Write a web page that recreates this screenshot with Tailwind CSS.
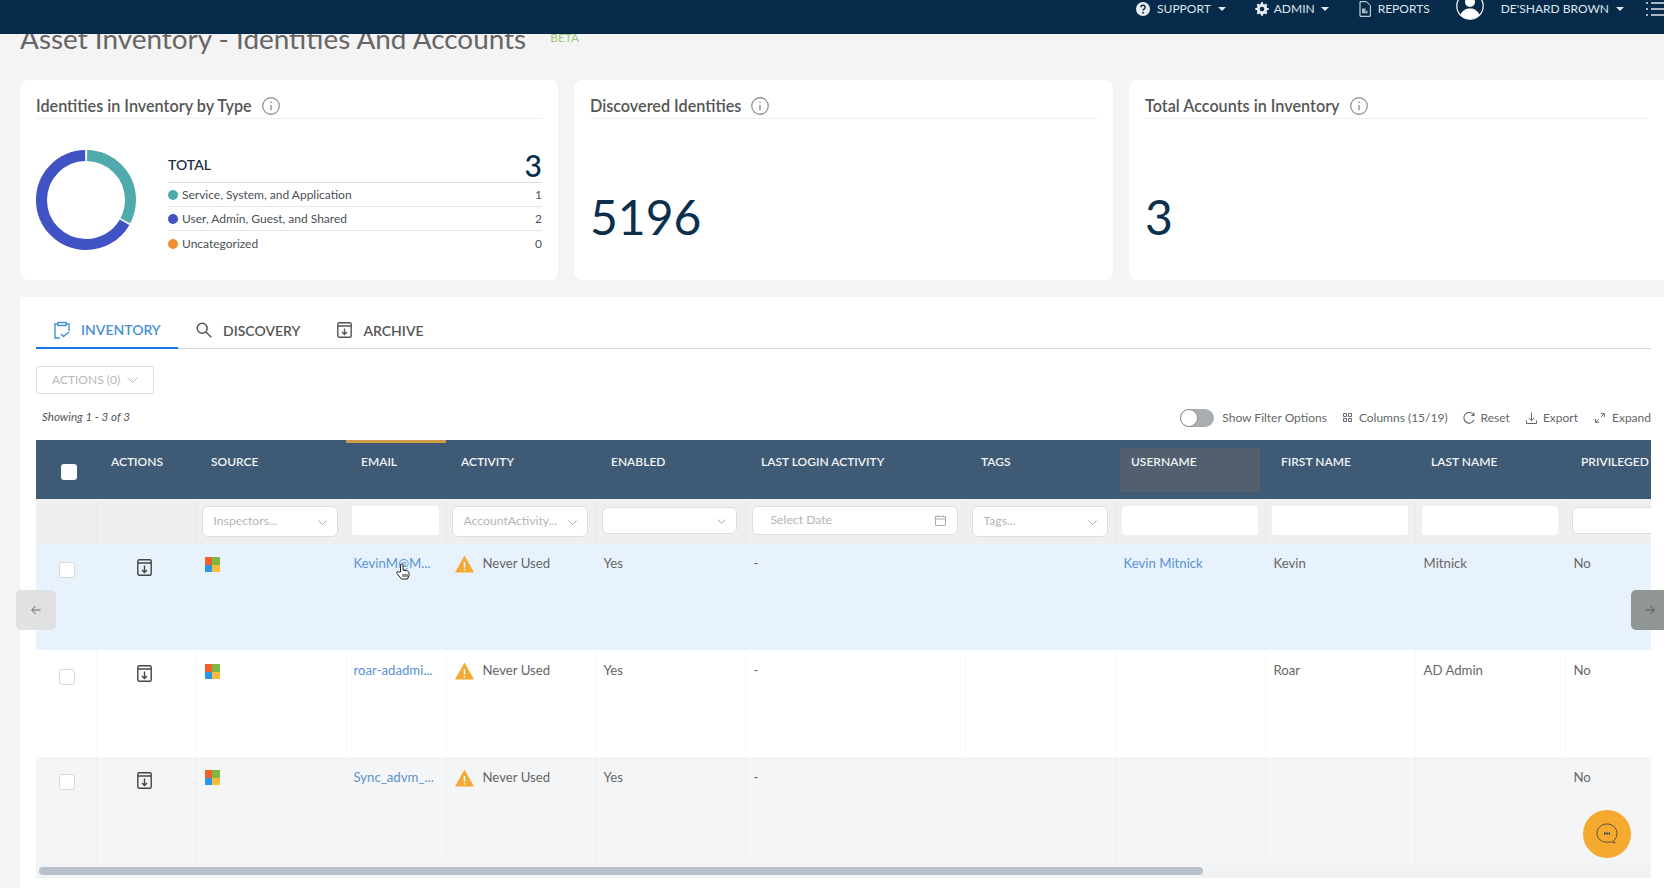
<!DOCTYPE html>
<html>

<head>
    <meta name="viewport" content="width=device-width, initial-scale=1.0">
    <script src="https://cdn.jsdelivr.net/npm/@tailwindcss/browser@4"></script>
    <title>Asset Inventory - Identities And Accounts</title>
</head>

<body class="h-screen overflow-hidden bg-[#f4f4f5] font-['Lato',sans-serif] text-[#5f6368]">
    <!-- top bar -->
    <header class="relative z-10 flex h-[34px] items-start justify-end bg-[#062b4a] text-[12px] text-[#dfe5ea]">
        <div class="flex h-[18px] items-center">
            <svg class="mr-[7px] h-[14px] w-[14px]" viewBox="0 0 14 14">
                <circle cx="7" cy="7" r="7" fill="#e8edf1" />
                <path d="M4.9 5.3a2.1 2.1 0 1 1 3.3 1.7c-.8.5-1.2.9-1.2 1.6" fill="none" stroke="#062b4a" stroke-width="1.5" />
                <circle cx="7" cy="10.7" r=".95" fill="#062b4a" />
            </svg>
            <span>SUPPORT</span>
            <span class="ml-[7px] h-0 w-0 border-x-[4px] border-t-[4px] border-x-transparent border-t-[#dfe5ea]"></span>
            <svg class="ml-[29px] mr-[5px] h-[14px] w-[14px]" viewBox="0 0 14 14">
                <circle cx="7" cy="7" r="3.8" fill="none" stroke="#e8edf1" stroke-width="3" />
                <path d="M7 .3v2.4M7 11.3v2.4M.3 7h2.4M11.3 7h2.4M2.3 2.3 4 4M10 10l1.7 1.7M2.3 11.7 4 10M10 4l1.7-1.7" stroke="#e8edf1" stroke-width="2.2" />
            </svg>
            <span>ADMIN</span>
            <span class="ml-[6px] h-0 w-0 border-x-[4px] border-t-[4px] border-x-transparent border-t-[#dfe5ea]"></span>
            <svg class="ml-[30px] mr-[7px] h-[16px] w-[12px]" viewBox="0 0 12 16">
                <path d="M1 .7h6.5L11.3 4.500V15.300H1z" fill="none" stroke="#e8edf1" stroke-width="1" />
                <path d="M3 7.500h3.500v3.500l2 -1.700v3H3z" fill="#aeb9c3" />
            </svg>
            <span>REPORTS</span>
            <svg class="ml-[26px] mr-[17px] h-[28px] w-[28px] -translate-y-[3px]" viewBox="0 0 28 28">
                <circle cx="14" cy="14" r="13.200" fill="#062b4a" stroke="#fff" stroke-width="1.200" />
                <circle cx="14" cy="10" r="5" fill="#fff" />
                <path d="M4.500 23c1.500-4.500 5-5.500 7-6.500h5c2 1 5.500 2 7 6.500a13 13 0 0 1-19 0z" fill="#fff" />
            </svg>
            <span>DE'SHARD BROWN</span>
            <span class="ml-[7px] h-0 w-0 border-x-[4px] border-t-[4px] border-x-transparent border-t-[#dfe5ea]"></span>
            <svg class="ml-[22px] h-[16px] w-[18px]" viewBox="0 0 18 16">
                <path d="M0 2h2M5 2h13M0 8h2M5 8h13M0 14h2M5 14h13" stroke="#dfe5ea" stroke-width="1.600" />
            </svg>
        </div>
    </header>

    <main class="-mt-[2px]">
        <!-- page title, scrolled partly under the bar -->
        <div class="flex h-[48px] items-start pl-[20px]">
            <h1 class="-mt-[12px] text-[27.900px] leading-[36px] text-[#666]">Asset Inventory - Identities And Accounts</h1>
            <span class="ml-[24px] -mt-[1px] text-[12px] leading-[14px] text-[#9cc77c]">BETA</span>
        </div>

        <!-- summary cards -->
        <section class="flex gap-[16px] pl-[20px]">
            <div class="h-[200px] w-[538px] shrink-0 rounded-lg bg-white px-[16px]">
                <div class="flex h-[39px] items-center gap-[10px] border-b border-[#eeeeee] pt-[14px]">
                    <h2 class="text-[16.200px] font-semibold text-[#555]">Identities in Inventory by Type</h2>
                    <svg class="h-[18px] w-[18px]" viewBox="0 0 17 17" fill="none" stroke="#8d9399">
                        <circle cx="8.500" cy="8.500" r="7.800" stroke-width="1.200" />
                        <path d="M8.500 7.500v5M8.500 4.200v1.500" stroke-width="1.300" />
                    </svg>
                </div>
                <div class="mt-[31px] flex gap-[32px]">
                    <svg class="h-[100px] w-[100px] shrink-0 -rotate-90" viewBox="0 0 100 100" fill="none">
                        <circle cx="50" cy="50" r="44.500" stroke="#4053c4" stroke-width="11" pathLength="100" stroke-dasharray="66.400 33.600" stroke-dashoffset="-33.300" />
                        <circle cx="50" cy="50" r="44.500" stroke="#50a9aa" stroke-width="11" pathLength="100" stroke-dasharray="32.400 67.600" stroke-dashoffset="-.400" />
                    </svg>
                    <div class="flex-1 text-[12px] text-[#4a4f55]">
                        <div class="flex h-[33px] items-center justify-between border-b border-[#dedede] pb-[3px] text-[#1d3246]">
                            <span class="text-[14px] font-semibold">TOTAL</span>
                            <span class="text-[30px] font-medium leading-none text-[#062b4a]">3</span>
                        </div>
                        <div class="flex h-[24px] items-center border-b border-[#e4e4e4] pt-[1px]">
                            <span class="mr-[4px] h-[10px] w-[10px] rounded-full bg-[#50a9aa]"></span>
                            <span class="flex-1">Service, System, and Application</span>
                            <span>1</span>
                        </div>
                        <div class="flex h-[24px] items-center border-b border-[#e4e4e4] pt-[1px]">
                            <span class="mr-[4px] h-[10px] w-[10px] rounded-full bg-[#4053c4]"></span>
                            <span class="flex-1">User, Admin, Guest, and Shared</span>
                            <span>2</span>
                        </div>
                        <div class="flex h-[24px] items-center pt-[1px]">
                            <span class="mr-[4px] h-[10px] w-[10px] rounded-full bg-[#ee8f33]"></span>
                            <span class="flex-1">Uncategorized</span>
                            <span>0</span>
                        </div>
                    </div>
                </div>
            </div>

            <div class="h-[200px] w-[539px] shrink-0 rounded-lg bg-white px-[16px]">
                <div class="flex h-[39px] items-center gap-[10px] border-b border-[#eeeeee] pt-[14px]">
                    <h2 class="text-[16.200px] font-semibold text-[#555]">Discovered Identities</h2>
                    <svg class="h-[18px] w-[18px]" viewBox="0 0 17 17" fill="none" stroke="#8d9399">
                        <circle cx="8.500" cy="8.500" r="7.800" stroke-width="1.200" />
                        <path d="M8.500 7.500v5M8.500 4.200v1.500" stroke-width="1.300" />
                    </svg>
                </div>
                <div class="mt-[70px] text-[48px] leading-[56px] text-[#0c2f4d]">5196</div>
            </div>

            <div class="h-[200px] flex-1 rounded-l-lg bg-white px-[16px]">
                <div class="flex h-[39px] items-center gap-[10px] border-b border-[#eeeeee] pt-[14px]">
                    <h2 class="text-[16.200px] font-semibold text-[#555]">Total Accounts in Inventory</h2>
                    <svg class="h-[18px] w-[18px]" viewBox="0 0 17 17" fill="none" stroke="#8d9399">
                        <circle cx="8.500" cy="8.500" r="7.800" stroke-width="1.200" />
                        <path d="M8.500 7.500v5M8.500 4.200v1.500" stroke-width="1.300" />
                    </svg>
                </div>
                <div class="mt-[70px] text-[48px] leading-[56px] text-[#0c2f4d]">3</div>
            </div>
        </section>

        <!-- inventory panel -->
        <section class="relative ml-[20px] mt-[17px] h-[591px] bg-white pl-[16px] pr-[13px] pt-[15px]">
            <nav class="flex h-[37px] border-b border-[#d6d6d6] text-[14px] font-semibold">
                <a class="-mb-px flex w-[142px] items-center gap-[11px] border-b-[2px] border-[#1976e0] pl-[18px] text-[#4a8fd6]" href="#">
                    <svg class="h-[18px] w-[16px]" viewBox="0 0 16 18" fill="none" stroke="#4a8fd6" stroke-width="1.400">
                        <path d="M4 3H1v14h5M12 3h3v7M4 1.500h8v3H4zM7 13l2.500 2.500L15 11" />
                    </svg>
                    INVENTORY
                </a>
                <a class="flex items-center gap-[11px] pl-[18px] text-[#555]" href="#">
                    <svg class="h-[16px] w-[16px]" viewBox="0 0 16 16" fill="none" stroke="#555" stroke-width="1.500">
                        <circle cx="6.200" cy="6.200" r="5" />
                        <path d="m10 10 5.300 5.300" />
                    </svg>
                    DISCOVERY
                </a>
                <a class="ml-[37px] flex items-center gap-[11px] text-[#555]" href="#">
                    <svg class="h-[16px] w-[15px]" viewBox="0 0 15 16" fill="none" stroke="#555" stroke-width="1.400">
                        <rect x=".8" y=".8" width="13.400" height="14.400" rx="1.500" />
                        <path d="M1 4h13M7.500 6.500v6M5 10l2.500 2.500L10 10" />
                    </svg>
                    ARCHIVE
                </a>
            </nav>

            <button class="mt-[17px] flex h-[28px] w-[118px] items-center gap-[7px] rounded-[3px] border border-[#dcdcdc] pl-[15px] text-[12px] text-[#b9b9b9]">
                ACTIONS (0)
                <svg class="h-[6px] w-[11px]" viewBox="0 0 11 6" fill="none" stroke="#b9b9b9"><path d="m.5.500 5 5 5-5" /></svg>
            </button>

            <div class="flex h-[46px] items-center justify-between">
                <span class="pl-[6px] text-[11.600px] italic text-[#555]">Showing 1 - 3 of 3</span>
                <div class="flex items-center pt-[1px] text-[12px] text-[#666]">
                    <span class="relative mr-[8px] h-[18px] w-[34px] rounded-full bg-[#a6adb3]">
                        <span class="absolute left-0 top-0 h-[18px] w-[18px] rounded-full border border-[#8f8f8f] bg-white"></span>
                    </span>
                    <span>Show Filter Options</span>
                    <svg class="ml-[16px] mr-[7px] h-[9px] w-[9px]" viewBox="0 0 9 9" fill="none" stroke="#666">
                        <path d="M.5.500h3v3h-3zM5.500.500h3v3h-3zM.5 5.500h3v3h-3zM5.500 5.500h3v3h-3z" />
                    </svg>
                    <span>Columns (15/19)</span>
                    <svg class="ml-[15px] mr-[6px] h-[12px] w-[12px]" viewBox="0 0 12 12" fill="none" stroke="#666" stroke-width="1.100">
                        <path d="M10.800 3.200A5.300 5.300 0 1 0 11 8M11 .8v2.700H8.300" />
                    </svg>
                    <span>Reset</span>
                    <svg class="ml-[16px] mr-[6px] h-[12px] w-[11px]" viewBox="0 0 11 12" fill="none" stroke="#666">
                        <path d="M5.500.5v8M2.800 6l2.700 2.700L8.200 6M.5 8.500v3h10v-3" />
                    </svg>
                    <span>Export</span>
                    <svg class="ml-[17px] mr-[7px] h-[10px] w-[10px]" viewBox="0 0 10 10" fill="none" stroke="#666">
                        <path d="m.8 9.200 3-3M6.200 3.800l3-3M.6 6v3.400H4M6 .6h3.400V4" />
                    </svg>
                    <span>Expand</span>
                </div>
            </div>

            <!-- table -->
            <div class="relative h-[438px] w-[1615px] overflow-hidden">
                <table class="w-[1679px] table-fixed text-[13.200px] text-[#666]">
                    <colgroup>
                        <col class="w-[60px]">
                        <col class="w-[99px]">
                        <col class="w-[151px]">
                        <col class="w-[100px]">
                        <col class="w-[149px]">
                        <col class="w-[150px]">
                        <col class="w-[220px]">
                        <col class="w-[150px]">
                        <col class="w-[150px]">
                        <col class="w-[150px]">
                        <col class="w-[150px]">
                        <col class="w-[150px]">
                    </colgroup>
                    <thead>
                        <tr class="h-[59px] bg-[#3e5a74] text-left text-[12px] text-[#f1f4f6]">
                            <th class="pl-[25px] align-top pt-[24px]"><span class="block h-[16px] w-[16px] rounded-[3px] bg-white"></span></th>
                            <th class="pl-[15px] pt-[13px] align-top font-semibold">ACTIONS</th>
                            <th class="pl-[16px] pt-[13px] align-top font-semibold">SOURCE</th>
                            <th class="relative pl-[15px] pt-[13px] align-top font-semibold"><span class="absolute left-0 top-0 h-[3px] w-full bg-[#d19a47]"></span>EMAIL</th>
                            <th class="pl-[15px] pt-[13px] align-top font-semibold">ACTIVITY</th>
                            <th class="pl-[16px] pt-[13px] align-top font-semibold">ENABLED</th>
                            <th class="pl-[16px] pt-[13px] align-top font-semibold">LAST LOGIN ACTIVITY</th>
                            <th class="pl-[16px] pt-[13px] align-top font-semibold">TAGS</th>
                            <th class="relative pl-[16px] pt-[13px] align-top font-semibold"><span class="absolute bottom-[7px] left-[5px] top-[8px] w-[140px] bg-[#525f6e]"></span><span class="relative">USERNAME</span></th>
                            <th class="pl-[16px] pt-[13px] align-top font-semibold">FIRST NAME</th>
                            <th class="pl-[16px] pt-[13px] align-top font-semibold">LAST NAME</th>
                            <th class="pl-[16px] pt-[13px] align-top font-semibold">PRIVILEGED</th>
                        </tr>
                        <tr class="h-[45px] bg-[#efefef] text-[12.200px] text-[#b5b5b5]">
                            <th class="border-r border-[#e9e9e9]"></th>
                            <th class="border-r border-[#e9e9e9]"></th>
                            <th class="border-r border-[#e9e9e9] pl-[6px] pr-[8px] font-normal">
                                <div class="flex h-[31px] items-center justify-between rounded-md border border-[#dedede] bg-white pl-[11px] pr-[10px]">Inspectors...
                                    <svg class="mt-[2px] h-[5px] w-[9px]" viewBox="0 0 9 5" fill="none" stroke="#aaa"><path d="m.5.500 4 4 4-4" /></svg>
                                </div>
                            </th>
                            <th class="border-r border-[#e9e9e9] pl-[5px] pr-[7px] font-normal"><div class="-mt-[2px] h-[29px] rounded-[3px] bg-white"></div></th>
                            <th class="border-r border-[#e9e9e9] pl-[5px] pr-[7px] font-normal">
                                <div class="flex h-[31px] items-center justify-between rounded-md border border-[#dedede] bg-white pl-[11px] pr-[10px]">AccountActivity...
                                    <svg class="mt-[2px] h-[5px] w-[9px]" viewBox="0 0 9 5" fill="none" stroke="#aaa"><path d="m.5.500 4 4 4-4" /></svg>
                                </div>
                            </th>
                            <th class="border-r border-[#e9e9e9] pl-[6px] pr-[8px] font-normal">
                                <div class="-mt-[3px] flex h-[27px] items-center justify-end rounded-md border border-[#dedede] bg-white pr-[10px]">
                                    <svg class="mt-[2px] h-[5px] w-[9px]" viewBox="0 0 9 5" fill="none" stroke="#aaa"><path d="m.5.500 4 4 4-4" /></svg>
                                </div>
                            </th>
                            <th class="border-r border-[#e9e9e9] pl-[6px] pr-[7px] font-normal">
                                <div class="-mt-[2px] flex h-[29px] items-center justify-between rounded-md border border-[#dedede] bg-white pl-[18px] pr-[11px]">Select Date
                                    <svg class="h-[11px] w-[11px]" viewBox="0 0 11 11" fill="none" stroke="#aaa"><path d="M.5 1.500h10v9H.5zM.5 4h10M3 .2v1.500M8 .2v1.500" /></svg>
                                </div>
                            </th>
                            <th class="border-r border-[#e9e9e9] pl-[6px] pr-[7px] font-normal">
                                <div class="flex h-[31px] items-center justify-between rounded-md border border-[#dedede] bg-white pl-[11px] pr-[10px]">Tags...
                                    <svg class="mt-[2px] h-[5px] w-[9px]" viewBox="0 0 9 5" fill="none" stroke="#aaa"><path d="m.5.500 4 4 4-4" /></svg>
                                </div>
                            </th>
                            <th class="border-r border-[#e9e9e9] pl-[6px] pr-[7px] font-normal"><div class="-mt-[2px] h-[29px] rounded-[3px] bg-white"></div></th>
                            <th class="border-r border-[#e9e9e9] pl-[6px] pr-[7px] font-normal"><div class="-mt-[2px] h-[29px] rounded-[3px] bg-white"></div></th>
                            <th class="border-r border-[#e9e9e9] pl-[6px] pr-[7px] font-normal"><div class="-mt-[2px] h-[29px] rounded-[3px] bg-white"></div></th>
                            <th class="pl-[6px] font-normal"><div class="-mt-[3px] h-[27px] rounded-md border border-[#dedede] bg-white"></div></th>
                        </tr>
                    </thead>
                    <tbody>
                        <tr class="h-[106px] bg-[#e8f2fc]">
                            <td class="border-r border-[#e4eef8] pl-[23px] pt-[18px] align-top"><span class="block h-[16px] w-[16px] rounded-[3px] border border-[#d9d9d9] bg-white"></span></td>
                            <td class="border-r border-[#e4eef8] pl-[40px] pt-[15px] align-top">
                                <svg class="h-[17px] w-[15px]" viewBox="0 0 15 17" fill="none" stroke="#444" stroke-width="1.400"><rect x=".8" y=".8" width="13.400" height="15.400" rx="1.500" /><path d="M1 4h13M7.500 6.500v7M5 11l2.500 2.500L10 11" /></svg>
                            </td>
                            <td class="border-r border-[#e4eef8] pl-[9px] pt-[13px] align-top">
                                <span class="grid h-[15px] w-[15px] grid-cols-2"><i class="bg-[#f25f29]"></i><i class="bg-[#7fb744]"></i><i class="bg-[#2a96e6]"></i><i class="bg-[#fbbb3b]"></i></span>
                            </td>
                            <td class="relative border-r border-[#e4eef8] pl-[7px] pt-[10px] align-top text-[#5a93d3]">KevinM@M...
                                <svg class="absolute left-[49px] top-[19px] h-[17px] w-[14px]" viewBox="0 0 14 17" fill="#fff" stroke="#222" stroke-width="1"><path d="M4.500 9V2a1.200 1.200 0 0 1 2.500 0v5l4.500 1c1 .3 1.500 1 1.500 2v2.500l-1.500 3.500h-6L1 10.500c-.8-1 .5-2.500 1.800-1.500z" /><path d="M7 11v3M9 11v3M11 11v3" /></svg>
                            </td>
                            <td class="border-r border-[#e4eef8] pl-[8px] pt-[10px] align-top">
                                <span class="flex items-center gap-[9px]">
                                    <svg class="h-[18px] w-[19px]" viewBox="0 0 19 18"><path d="M9.500 .5 19 17.500H0z" fill="#f5a935" /><path d="M9.500 7v5.500M9.500 14v1.500" stroke="#fff" stroke-width="1.500" /></svg>
                                    Never Used
                                </span>
                            </td>
                            <td class="border-r border-[#e4eef8] pl-[8px] pt-[10px] align-top">Yes</td>
                            <td class="border-r border-[#e4eef8] pl-[8px] pt-[10px] align-top">-</td>
                            <td class="border-r border-[#e4eef8]"></td>
                            <td class="border-r border-[#e4eef8] pl-[8px] pt-[10px] align-top text-[#5a93d3]">Kevin Mitnick</td>
                            <td class="border-r border-[#e4eef8] pl-[8px] pt-[10px] align-top">Kevin</td>
                            <td class="border-r border-[#e4eef8] pl-[8px] pt-[10px] align-top">Mitnick</td>
                            <td class="pl-[8px] pt-[10px] align-top">No</td>
                        </tr>
                        <tr class="h-[107px] bg-white">
                            <td class="border-r border-[#f8f8f8] pl-[23px] pt-[19px] align-top"><span class="block h-[16px] w-[16px] rounded-[3px] border border-[#d9d9d9] bg-white"></span></td>
                            <td class="border-r border-[#f8f8f8] pl-[40px] pt-[15px] align-top">
                                <svg class="h-[17px] w-[15px]" viewBox="0 0 15 17" fill="none" stroke="#444" stroke-width="1.400"><rect x=".8" y=".8" width="13.400" height="15.400" rx="1.500" /><path d="M1 4h13M7.500 6.500v7M5 11l2.500 2.500L10 11" /></svg>
                            </td>
                            <td class="border-r border-[#f8f8f8] pl-[9px] pt-[14px] align-top">
                                <span class="grid h-[15px] w-[15px] grid-cols-2"><i class="bg-[#f25f29]"></i><i class="bg-[#7fb744]"></i><i class="bg-[#2a96e6]"></i><i class="bg-[#fbbb3b]"></i></span>
                            </td>
                            <td class="border-r border-[#f8f8f8] pl-[7px] pt-[11px] align-top text-[#5a93d3]">roar-adadmi...</td>
                            <td class="border-r border-[#f8f8f8] pl-[8px] pt-[11px] align-top">
                                <span class="flex items-center gap-[9px]">
                                    <svg class="h-[18px] w-[19px]" viewBox="0 0 19 18"><path d="M9.500 .5 19 17.500H0z" fill="#f5a935" /><path d="M9.500 7v5.500M9.500 14v1.500" stroke="#fff" stroke-width="1.500" /></svg>
                                    Never Used
                                </span>
                            </td>
                            <td class="border-r border-[#f8f8f8] pl-[8px] pt-[11px] align-top">Yes</td>
                            <td class="border-r border-[#f8f8f8] pl-[8px] pt-[11px] align-top">-</td>
                            <td class="border-r border-[#f8f8f8]"></td>
                            <td class="border-r border-[#f8f8f8]"></td>
                            <td class="border-r border-[#f8f8f8] pl-[8px] pt-[11px] align-top">Roar</td>
                            <td class="border-r border-[#f8f8f8] pl-[8px] pt-[11px] align-top">AD Admin</td>
                            <td class="pl-[8px] pt-[11px] align-top">No</td>
                        </tr>
                        <tr class="h-[106px] bg-[#f4f5f6]">
                            <td class="border-r border-[#f0f0f0] pl-[23px] pt-[17px] align-top"><span class="block h-[16px] w-[16px] rounded-[3px] border border-[#d9d9d9] bg-white"></span></td>
                            <td class="border-r border-[#f0f0f0] pl-[40px] pt-[15px] align-top">
                                <svg class="h-[17px] w-[15px]" viewBox="0 0 15 17" fill="none" stroke="#444" stroke-width="1.400"><rect x=".8" y=".8" width="13.400" height="15.400" rx="1.500" /><path d="M1 4h13M7.500 6.500v7M5 11l2.500 2.500L10 11" /></svg>
                            </td>
                            <td class="border-r border-[#f0f0f0] pl-[9px] pt-[13px] align-top">
                                <span class="grid h-[15px] w-[15px] grid-cols-2"><i class="bg-[#f25f29]"></i><i class="bg-[#7fb744]"></i><i class="bg-[#2a96e6]"></i><i class="bg-[#fbbb3b]"></i></span>
                            </td>
                            <td class="border-r border-[#f0f0f0] pl-[7px] pt-[11px] align-top text-[#5a93d3]">Sync_advm_...</td>
                            <td class="border-r border-[#f0f0f0] pl-[8px] pt-[11px] align-top">
                                <span class="flex items-center gap-[9px]">
                                    <svg class="h-[18px] w-[19px]" viewBox="0 0 19 18"><path d="M9.500 .5 19 17.500H0z" fill="#f5a935" /><path d="M9.500 7v5.500M9.500 14v1.500" stroke="#fff" stroke-width="1.500" /></svg>
                                    Never Used
                                </span>
                            </td>
                            <td class="border-r border-[#f0f0f0] pl-[8px] pt-[11px] align-top">Yes</td>
                            <td class="border-r border-[#f0f0f0] pl-[8px] pt-[11px] align-top">-</td>
                            <td class="border-r border-[#f0f0f0]"></td>
                            <td class="border-r border-[#f0f0f0]"></td>
                            <td class="border-r border-[#f0f0f0]"></td>
                            <td class="border-r border-[#f0f0f0]"></td>
                            <td class="pl-[8px] pt-[11px] align-top">No</td>
                        </tr>
                    </tbody>
                </table>
                <!-- horizontal scrollbar -->
                <div class="h-[15px] bg-[#f0f2f4] pl-[3px] pt-[4px]">
                    <div class="h-[8px] w-[1164px] rounded-full bg-[#b8c1c9]"></div>
                </div>
            </div>

            <!-- table scroll arrows -->
            <button class="absolute left-[-4px] top-[293px] flex h-[40px] w-[40px] items-center justify-center rounded-[5px] bg-[#dedede]/90">
                <svg class="h-[10px] w-[10px]" viewBox="0 0 10 10" fill="none" stroke="#666"><path d="M9.500 5H.8M4.500 1 .7 5l3.800 4" /></svg>
            </button>
            <button class="absolute right-0 top-[293px] flex h-[40px] w-[33px] items-center justify-center rounded-l-[5px] bg-[#8f9694] pl-[5px]">
                <svg class="h-[10px] w-[10px]" viewBox="0 0 10 10" fill="none" stroke="#555"><path d="M.5 5h8.700M5.500 1l3.800 4-3.800 4" /></svg>
            </button>

            <!-- chat -->
            <button class="absolute left-[1563px] top-[513px] flex h-[48px] w-[48px] items-center justify-center rounded-full bg-[#f5a92f]">
                <svg class="h-[22px] w-[22px]" viewBox="0 0 22 22" fill="none">
                    <path d="M11 1c5.500 0 10 4 10 9.500 0 3.200-1.300 5.500-3.500 7l1.500 2.500-4-1.200C8 20.500 1 17 1 10.500 1 5 5.500 1 11 1z" stroke="#3a3a3a" stroke-width=".8" />
                    <path d="M8 10.500h6" stroke="#173a5e" stroke-width="1.800" stroke-dasharray="1.500 .8" />
                </svg>
            </button>
        </section>
    </main>
</body>

</html>
